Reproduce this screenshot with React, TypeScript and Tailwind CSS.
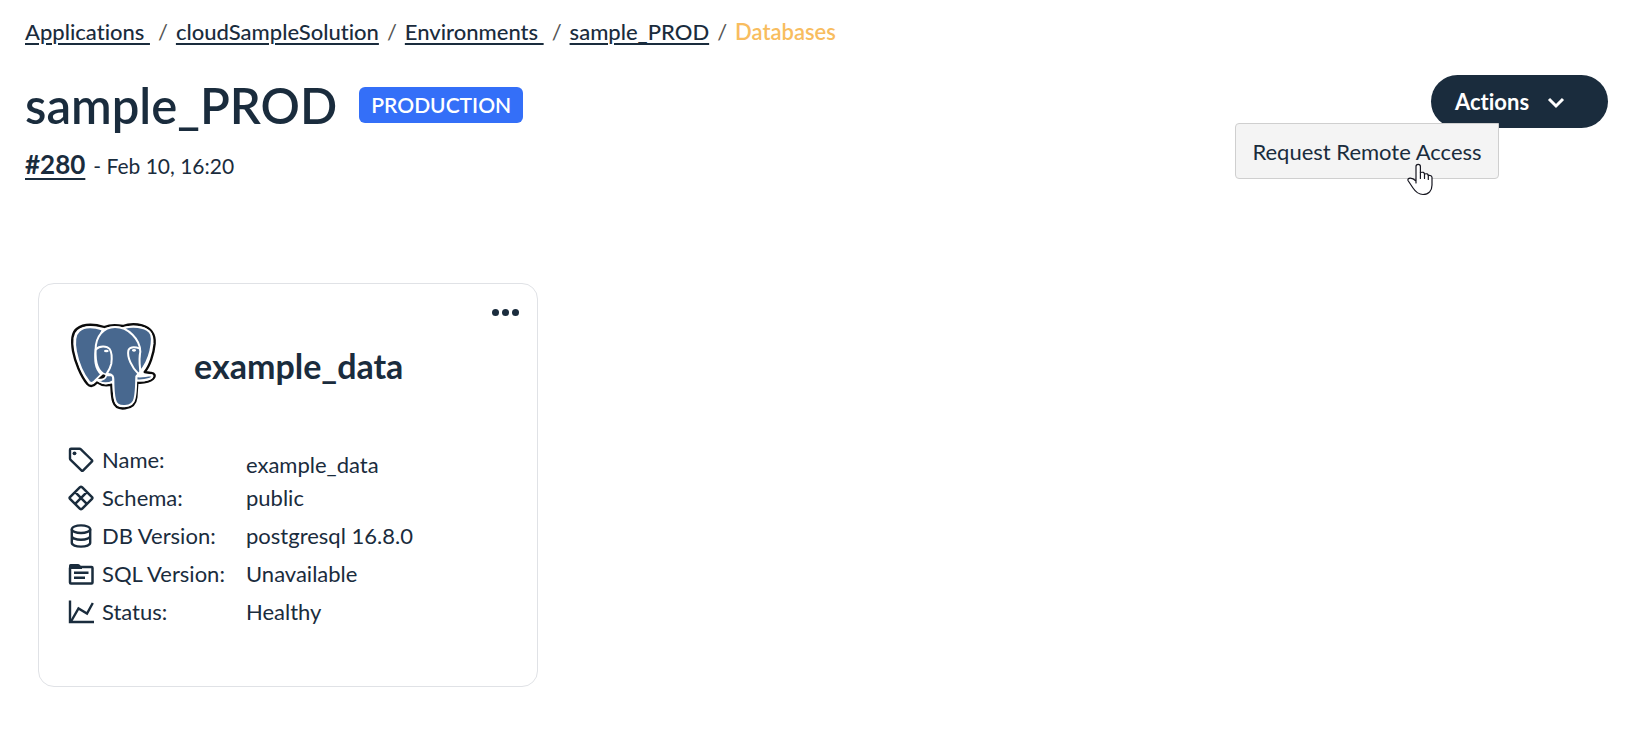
import { useState } from "react";
import type { ReactNode } from "react";

type Crumb = { label: string; href: string };

const crumbs: Crumb[] = [
  { label: "Applications\u00a0", href: "#applications" },
  { label: "cloudSampleSolution", href: "#solution" },
  { label: "Environments\u00a0", href: "#environments" },
  { label: "sample_PROD", href: "#sample-prod" },
];

function TagIcon() {
  return (
    <svg viewBox="0 0 26 26" className="size-[26px]" fill="none" stroke="currentColor" strokeWidth="2.4" strokeLinejoin="round">
      <path d="M3 1.800h8.500q.8 0 1.400.6L23.800 13q.8.900 0 1.700l-8.600 8.600q-.900.900-1.800 0L2.600 12.800q-.6-.6-.6-1.400V2.800q0-1 1-1z" />
      <circle cx="6.500" cy="6.300" r="1.900" fill="currentColor" stroke="none" />
    </svg>
  );
}

function SchemaIcon() {
  return (
    <svg viewBox="0 0 26 26" className="size-[26px]" fill="none" stroke="currentColor" strokeWidth="2.5" strokeLinejoin="round">
      <path d="M12 2.200q1-.800 2 0L24 12.100q.8.900 0 1.800L14 23.800q-1 .8-2 0L2 13.900q-.8-.9 0-1.800zM7.200 7.200l11.600 11.600M18.800 7.200 7.200 18.800" />
    </svg>
  );
}

function DatabaseIcon() {
  return (
    <svg viewBox="0 0 26 26" className="size-[26px]" fill="none" stroke="currentColor" strokeWidth="2.4">
      <ellipse cx="13" cy="6.200" rx="9.200" ry="3.800" />
      <path d="M3.800 6.200v13.600c0 2.200 4 3.800 9.200 3.800s9.200-1.600 9.200-3.800V6.200M3.800 13c0 2.200 4 3.800 9.200 3.800s9.200-1.600 9.200-3.800" />
    </svg>
  );
}

function FolderIcon() {
  return (
    <svg viewBox="0 0 26 26" className="size-[26px]" fill="none" stroke="currentColor" strokeWidth="2.5" strokeLinejoin="round">
      <rect x="2" y="6" width="22.500" height="16.500" rx="1" />
      <path d="M1 8V4.500Q1 3 2.500 3H10q1 0 1.700.7L14 6.500V8z" fill="currentColor" stroke="none" />
      <path d="M6 11.800h14.500M6 16.800h11" />
    </svg>
  );
}

function ChartIcon() {
  return (
    <svg viewBox="0 0 26 26" className="size-[26px]" fill="none" stroke="currentColor" strokeWidth="2.4">
      <path d="M2 1.500V23h24" />
      <path d="M3 22.500 10.500 9.500l8.500 5L24.800 4" />
    </svg>
  );
}

function PostgresLogo() {
  return (
    <svg viewBox="24 0 330 330" className="size-[110px]" fill="none" strokeLinejoin="round" strokeLinecap="round" role="img" aria-label="PostgreSQL">
      <path
        d="M133 48C105 40 70 38 50 54C34 67 34 90 39 120C45 152 62 195 82 219C90 228 100 227 112 214C124 223 140 225 154 221C155 240 155 258 160 273C165 289 178 294 195 292C214 290 227 281 229 259L232 215C250 216 269 213 279 204C288 195 284 185 272 186L254 183C269 165 281 130 284 98C286 66 273 51 246 43C226 38 206 39 188 45C168 41 148 42 133 48Z"
        fill="#fff"
        stroke="#0b0b0b"
        strokeWidth="7"
      />
      <g fill="#48688f" stroke="#fff" strokeWidth="6">
        <path d="M128 56C103 48 73 46 57 60C43 72 43 95 48 122C54 152 70 190 87 212C94 219 101 216 108 206L124 190C104 173 104 145 107 115Z" />
        <path d="M192 51C218 43 252 47 268 62C279 73 276 99 271 120C265 146 254 166 240 183L236 150L240 122Z" />
        <path d="M112 208C128 208 137 202 139 192L160 193L160 210C146 218 127 220 112 208Z" />
        <path d="M229 195C243 199 258 193 273 193C280 194 276 201 267 204C255 208 242 209 229 208Z" />
        <path d="M107 115C107 77 130 48 165 48C205 48 240 85 241 122C236 142 239 163 241 182L229 196C228 220 229 240 224 262C221 278 211 284 195 285C180 286 168 281 165 266C160 246 160 222 160 204C160 190 146 186 137 191C112 182 105 155 107 115Z" />
        <path d="M108 115C118 103 141 104 149 114C155 123 156 142 154 158C151 172 145 181 139 190" fill="none" />
        <path d="M240 113C220 105 207 109 205 119C201 139 215 168 234 187" fill="none" />
      </g>
      <path d="M114 203L129 190L136 192C137 200 127 205 114 203Z" fill="#0b0b0b" />
      <g fill="#fff">
        <ellipse cx="139" cy="120" rx="7" ry="4" />
        <ellipse cx="222" cy="118" rx="6" ry="4" />
      </g>
    </svg>
  );
}

function HandPointer() {
  return (
    <svg viewBox="0 0 26 34" className="absolute top-[38px] left-[171px] h-[34px] w-[26px]" fill="#fff" stroke="#15151f" strokeWidth="1.2" strokeLinejoin="round" strokeLinecap="round" aria-hidden="true">
      <path d="M9 21V4.500a2.200 2.200 0 0 1 4.400 0v6q3.800-.9 4.100 1.500 3.400-.9 3.800 1.400 3.500-.5 3.700 2.100v7.500c0 5.500-3.200 9.500-9 9.500-5 0-8-3.500-10-6.500l-5-7.500c-.8-3 4-3.500 8 .500" />
      <path d="M13.400 10.500v6M17.500 12v4.500M21.300 13.400v4" />
    </svg>
  );
}

type Detail = { label: string; value: string; icon: ReactNode; lowered?: boolean };

const details: Detail[] = [
  { label: "Name:", value: "example_data", icon: <TagIcon />, lowered: true },
  { label: "Schema:", value: "public", icon: <SchemaIcon /> },
  { label: "DB Version:", value: "postgresql 16.8.0", icon: <DatabaseIcon /> },
  { label: "SQL Version:", value: "Unavailable", icon: <FolderIcon /> },
  { label: "Status:", value: "Healthy", icon: <ChartIcon /> },
];

function Breadcrumbs() {
  return (
    <nav aria-label="Breadcrumb">
      <ol className="flex flex-wrap gap-x-2 text-[22px] leading-8 font-medium">
        {crumbs.map((crumb) => (
          <li key={crumb.href} className="flex gap-2">
            <a href={crumb.href} className="underline decoration-2 underline-offset-[3px]">
              {crumb.label}
            </a>
            <span className="font-normal text-[#555]">/</span>
          </li>
        ))}
        <li aria-current="page" className="font-semibold text-[#f8bd5f]">
          Databases
        </li>
      </ol>
    </nav>
  );
}

function ActionsMenu() {
  const [open, setOpen] = useState(true);

  return (
    <div className="relative">
      <button
        type="button"
        aria-expanded={open}
        onClick={() => setOpen(!open)}
        className="flex h-[53px] w-[177px] items-center gap-[18px] rounded-full bg-[#1a2c3d] pl-6 text-[22px] font-bold text-white"
      >
        Actions
        <svg viewBox="0 0 18 18" className="size-[18px]" fill="none" stroke="currentColor" strokeWidth="3">
          <path d="m2 6 7 7 7-7" />
        </svg>
      </button>
      {open && (
        <div className="absolute top-12 right-[109px] rounded-[4px] rounded-tr-none border border-[#cfcfcf] bg-[#f4f4f4]">
          <button type="button" className="h-[54px] w-[262px] text-[22px] whitespace-nowrap">
            Request Remote Access
          </button>
          <HandPointer />
        </div>
      )}
    </div>
  );
}

function DatabaseCard() {
  return (
    <article className="relative w-full max-w-[500px] rounded-2xl border border-[#e0e2e6] px-[29px] pt-[27px] pb-[55px]">
      <button type="button" aria-label="More options" className="absolute top-4 right-[18px] flex h-6 items-center gap-[3px]">
        <span className="size-[7px] rounded-full bg-current" />
        <span className="size-[7px] rounded-full bg-current" />
        <span className="size-[7px] rounded-full bg-current" />
      </button>
      <div className="flex items-center gap-4">
        <PostgresLogo />
        <h2 className="text-[34px] leading-10 font-bold">example_data</h2>
      </div>
      <dl className="mt-5 flex flex-col text-[22px] leading-[38px]">
        {details.map((row) => (
          <div key={row.label} className="flex h-[38px]">
            <dt className="flex w-[178px] items-center gap-2">
              {row.icon}
              {row.label}
            </dt>
            <dd className={row.lowered ? "pt-[5px]" : ""}>{row.value}</dd>
          </div>
        ))}
      </dl>
    </article>
  );
}

export default function App() {
  return (
    <main className="min-h-screen bg-white pt-4 pr-[26px] pl-[25px] font-[Lato,sans-serif] text-[#1a2c3d] [font-variant-ligatures:none]">
      <Breadcrumbs />
      <header className="mt-[27px] flex items-start justify-between">
        <div>
          <div className="flex items-center gap-[22px]">
            <h1 className="text-[49px] leading-[60px] font-semibold">sample_PROD</h1>
            <span className="rounded-md bg-[#346ff8] px-3 text-[21px] leading-9 font-semibold text-white">PRODUCTION</span>
          </div>
          <p className="mt-[13px] flex items-baseline gap-2 text-[21px] leading-8">
            <a href="#280" className="text-[26px] font-bold underline decoration-2 underline-offset-4">
              #280
            </a>
            - Feb 10, 16:20
          </p>
        </div>
        <ActionsMenu />
      </header>
      <section className="mt-[101px] px-[13px] pb-14">
        <DatabaseCard />
      </section>
    </main>
  );
}
